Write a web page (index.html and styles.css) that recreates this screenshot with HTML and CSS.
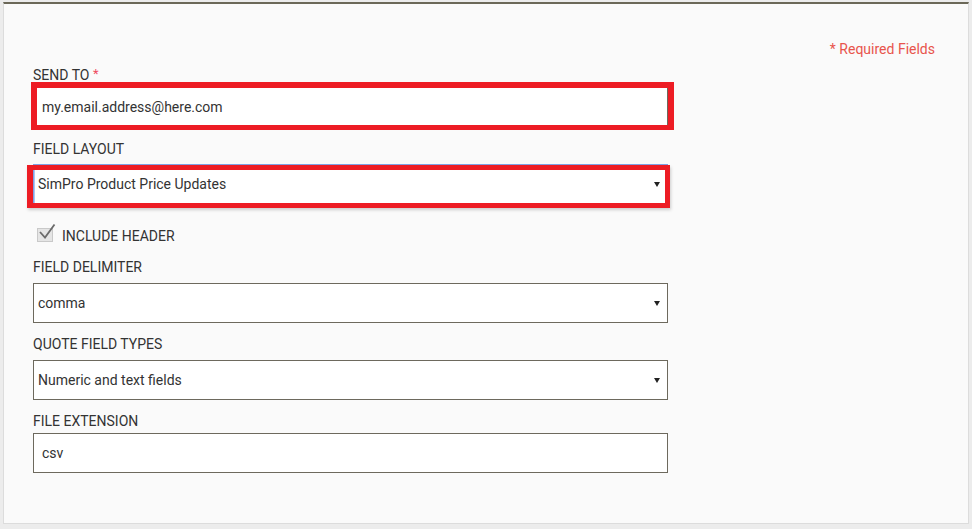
FILE: index.html
```html
<!DOCTYPE html>
<html>
<head>
<meta charset="utf-8">
<link rel="stylesheet" href="styles.css">
</head>
<body>
<div class="panel">
  <div class="required-note">* Required Fields</div>

  <div class="field field-first">
    <label class="label">SEND TO <span class="star">*</span></label>
    <div class="control-wrap input-wrap">
      <input class="text-input" type="text" value="my.email.address@here.com">
      <div class="highlight highlight-email"></div>
    </div>
  </div>

  <div class="field field-gap">
    <label class="label">FIELD LAYOUT</label>
    <div class="control-wrap select-wrap">
      <select class="select select-focus"><option>SimPro Product Price Updates</option></select>
      <span class="arrow"></span>
      <div class="highlight highlight-layout"></div>
    </div>
  </div>

  <div class="check-row">
    <svg class="check-icon" width="20" height="20" viewBox="0 0 20 20">
      <rect x="1.5" y="5.5" width="15" height="13" fill="#e5e5e5" stroke="#c9c9c9"/>
      <path d="M4 9 L9 14.5 L18.5 1.5" fill="none" stroke="#6b6b6b" stroke-width="1.8"/>
    </svg>
    <span class="check-label">INCLUDE HEADER</span>
  </div>

  <div class="field field-after-check">
    <label class="label">FIELD DELIMITER</label>
    <div class="control-wrap select-wrap">
      <select class="select"><option>comma</option></select>
      <span class="arrow"></span>
    </div>
  </div>

  <div class="field field-next">
    <label class="label">QUOTE FIELD TYPES</label>
    <div class="control-wrap select-wrap">
      <select class="select"><option>Numeric and text fields</option></select>
      <span class="arrow"></span>
    </div>
  </div>

  <div class="field field-next">
    <label class="label">FILE EXTENSION</label>
    <div class="control-wrap input-wrap">
      <input class="text-input" type="text" value="csv">
    </div>
  </div>
</div>
</body>
</html>
```

FILE: styles.css
```css
html, body {
  margin: 0;
  padding: 0;
}
body {
  background: #ececec;
  font-family: Roboto, "Liberation Sans", Arial, sans-serif;
  color: #333;
  font-size: 14px;
}
.panel {
  margin: 2px 3px 0 3px;
  background: #fafafa;
  border-top: 2px solid #6b6858;
  border-left: 1px solid #dcdcdc;
  border-right: 1px solid #dcdcdc;
  border-bottom: 1px solid #dcdcdc;
  padding: 37px 33px 50px 29px;
}
.required-note {
  text-align: right;
  color: #e8544c;
  line-height: 17px;
  font-size: 14px;
}
.field {
  display: flex;
  flex-direction: column;
  width: 635px;
}
.field-first { margin-top: 7px; }
.field-gap { margin-top: 12px; }
.field-after-check { margin-top: 12px; }
.field-next { margin-top: 11px; }
.label {
  display: block;
  height: 17px;
  line-height: 17px;
  padding-top: 2px;
  font-size: 14px;
  color: #333;
  text-transform: uppercase;
}
.star {
  color: #ee4b5e;
  font-size: 13px;
  line-height: 1;
  position: relative;
  top: -2px;
}
.control-wrap {
  position: relative;
  height: 40px;
}
.input-wrap { margin-top: 3px; }
.select-wrap { margin-top: 6px; }
.field-after-check .select-wrap,
.field-next .select-wrap { margin-top: 7px; }
.text-input, .select {
  box-sizing: border-box;
  width: 100%;
  height: 40px;
  border: 1px solid #6d695d;
  background: #fff;
  font-family: Roboto, "Liberation Sans", Arial, sans-serif;
  font-size: 14px;
  color: #333;
  margin: 0;
  border-radius: 0;
  outline: none;
}
.text-input {
  padding: 0 8px;
}
.select {
  -webkit-appearance: none;
  appearance: none;
  padding: 0 20px 0 4px;
}
.select-focus {
  border-color: #7fa3e6;
  box-shadow: inset 1px 0 0 #aec6f0;
}
.arrow {
  position: absolute;
  right: 8px;
  top: 18px;
  width: 0;
  height: 0;
  border-left: 3px solid transparent;
  border-right: 3px solid transparent;
  border-top: 5px solid #222;
  pointer-events: none;
}
.highlight {
  position: absolute;
  box-sizing: border-box;
  border: 6px solid #ed1c24;
  pointer-events: none;
}
.highlight-email {
  left: -2px;
  top: -5px;
  width: 643px;
  height: 48px;
  border-bottom-width: 5px;
}
.highlight-layout {
  left: -6px;
  top: 1px;
  width: 643px;
  height: 43px;
  border-width: 5px 5px 5px 6px;
  box-shadow: 1px 2px 3px rgba(0, 0, 0, 0.18);
}
.check-row {
  display: flex;
  align-items: flex-start;
  margin-top: 24px;
  height: 17px;
}
.check-icon {
  display: block;
  margin-left: 3px;
  margin-top: -5px;
}
.check-label {
  margin-left: 6px;
  line-height: 17px;
  font-size: 14px;
  color: #333;
}
```
